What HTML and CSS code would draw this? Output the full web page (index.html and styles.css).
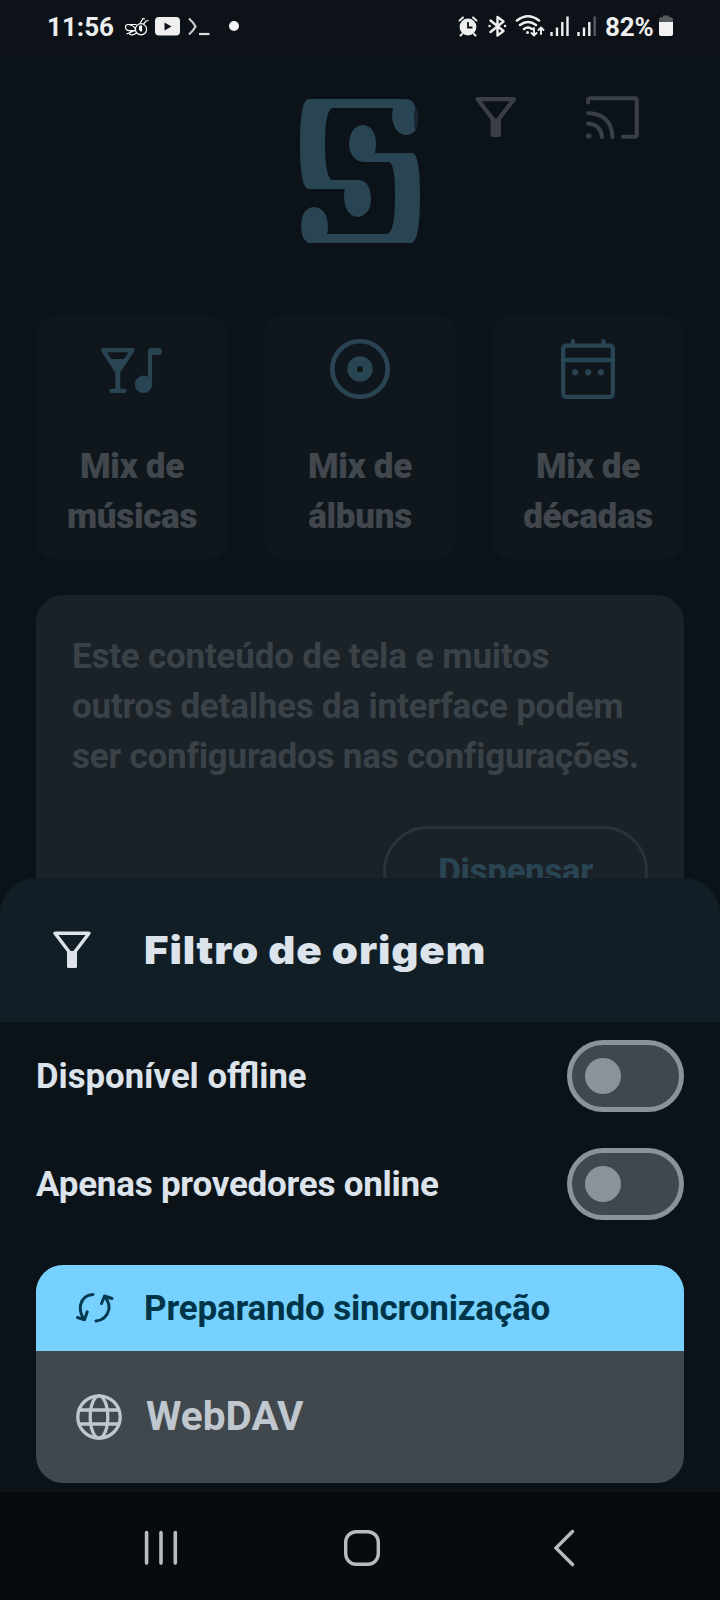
FILE: index.html
```
<!DOCTYPE html>
<html lang="pt-BR">
<head>
<meta charset="utf-8">
<title>Filtro de origem</title>
<link rel="stylesheet" href="styles.css">
</head>
<body>
<div class="screen">
  <div class="statusbar">
    <span class="clock">11:56</span>
    <svg class="status-left" width="120" height="28" viewBox="122 12 120 28">
      <g fill="none" stroke="#fff" stroke-width="1.200">
        <circle cx="141" cy="29.300" r="5.600"/>
        <path d="M136.500 24.500h-8.500q-2.500 0-2.500 2.500q0 3.500 4 3.700h5.500M128.500 24.500q6 1 7 5M135 30.500l-8.500 3.500M133 30.500q-4.500 2-3.500 3.500q3 2 7-1M140 23.500l3-5 2 .5M143.500 24l2.500-3 2.500-.5"/>
        <path d="M139.500 27.500q0-2 2-1.500v5q-2 0-2-3.500z" fill="#fff"/>
      </g>
      <rect x="155" y="17" width="25" height="18.500" rx="4" fill="#f0f0f0"/>
      <path d="M164.500 22.500v8l7-4z" fill="#0c1219"/>
      <path d="M189 18.500q4.500 4 6.500 8q-2 4-6.500 8" fill="none" stroke="#ccc" stroke-width="2.200"/>
      <path d="M199 34h10.500" stroke="#ddd" stroke-width="2.200"/>
      <circle cx="234" cy="26" r="5" fill="#f4f4f4"/>
    </svg>
    <svg class="status-right" width="140" height="28" viewBox="458 12 140 28">
      <g stroke="#eee" fill="none" stroke-linecap="round">
        <circle cx="468" cy="27" r="8.400" fill="#eee" stroke="none"/>
        <path d="M459.500 20.500l3.500-3M476.500 20.500l-3.500-3M462 34l-1.500 1.500M474 34l1.500 1.500" stroke-width="2"/>
        <path d="M468 22v5.500h4.500" stroke="#0c1219" stroke-width="1.800" stroke-linecap="butt"/>
        <path d="M490.500 20.500l13 10.500-6 4.500v-18.500l6 4.500-13 10.500M489.500 26h.1M505 26h.1" stroke-width="2.400" stroke-linejoin="round"/>
        <path d="M517 20.500q11-8.500 22 0M520 25q8-6 16 0M524 29q4-3 8 0" stroke-width="2.500"/>
        <circle cx="527.500" cy="32.500" r="1.500" fill="#eee" stroke="none"/>
        <path d="M534 28v7M531.500 33l2.500 2.500 2.500-2.500M541 34v-6.500M538.500 30l2.500-2.500 2.500 2.500" stroke-width="1.900"/>
      </g>
      <path d="M551.500 32v4M557 27.500v8.500M562.300 22v14M567.500 16.500v19.500M578.500 32v4M584 27.500v8.500M589.300 22v14" stroke="#eee" stroke-width="2.400"/>
      <path d="M594.700 16.500v19.500" stroke="#565a5e" stroke-width="2.400"/>
    </svg>
    <span class="battery-text">82%</span>
    <svg class="battery" width="14" height="22" viewBox="0 0 14 22">
      <path d="M0 8v-3q0-3 3-3h1v-1.500h6v1.500h1q3 0 3 3v3z" fill="#55595c"/>
      <path d="M0 7h14v12q0 2-2 2h-10q-2 0-2-2z" fill="#f2f2f2"/>
    </svg>
  </div>

  <div class="home">
    <div class="topbar">
      <svg class="logo" width="122" height="146" viewBox="299 98 122 146" fill="#294452">
        <path d="M308 99H405Q413 99 415 106Q419 119 415 131Q411 135 406 135Q394 134 392 117Q392 111 393 108H333Q325 109 325 143Q325 180 333 180H359Q370 181 371 198Q371 215 358 217Q346 216 344 199Q344 192 345 189H308Q300 187 300 144Q300 101 308 99Z"/>
        <path d="M415.500 106q6 13 0 26q-3-13 0-26z" fill="#182530"/>
        <path d="M412 243H308Q301 239 301 225Q302 208 314 207Q327 208 328 226Q328 231 327 234H387Q395 233 395 196Q395 163 389 162H363Q350 160 349 144Q350 126 363 125Q375 126 376 143Q376 149 375 153H413Q420 156 420 197Q420 239 412 243Z"/>
      </svg>
      <svg class="top-filter" width="42" height="42" viewBox="0 0 42 42">
        <path d="M2.500 3.200h36.500l-16.500 21.300h-3.500z" fill="none" stroke="#3a3f46" stroke-width="4.200" stroke-linejoin="round"/>
        <path d="M15.500 23h10.500v16q0 2-2 2h-6.500q-2 0-2-2z" fill="#3a3f46"/>
      </svg>
      <svg class="top-cast" width="54" height="44" viewBox="0 0 54 44">
        <g fill="none" stroke="#3a3f46" stroke-width="4" stroke-linecap="round" stroke-linejoin="round">
          <path d="M2 6.500v-2q0-2.300 2.300-2.300h44.200q2.300 0 2.300 2.300v34q0 2.300-2.300 2.300H37M2 17q23.500 1 24.500 24M2 27.500q13 1 14 13.500"/>
        </g>
        <circle cx="2.800" cy="40" r="2.800" fill="#3a3f46"/>
      </svg>
    </div>

    <div class="mixes">
      <div class="mix">
        <svg width="64" height="60" viewBox="100 339 64 60">
          <g fill="none" stroke="#294452" stroke-width="4.200" stroke-linecap="round" stroke-linejoin="round">
            <path d="M103 350.200h29.500l-12.500 18.800h-4.500zM117.800 367v23M111.500 390.800h13M150 384v-31q0-2.800 2.800-2.800h6"/>
          </g>
          <path d="M106.500 359h22.500l-10 14h-3z" fill="#294452"/>
          <path d="M115.500 368h4.800v22h-4.800z" fill="#294452"/>
          <circle cx="143.500" cy="384.300" r="8.700" fill="#294452"/>
          <rect x="148" y="348" width="14" height="7" rx="3.500" fill="#294452"/>
        </svg>
        <span>Mix de<br>músicas</span>
      </div>
      <div class="mix">
        <svg width="64" height="60" viewBox="328 339 64 60" fill="none" stroke="#294452">
          <circle cx="360" cy="369" r="27.700" stroke-width="4.600"/>
          <circle cx="360" cy="369" r="7.900" stroke-width="9.600"/>
        </svg>
        <span>Mix de<br>álbuns</span>
      </div>
      <div class="mix">
        <svg width="64" height="60" viewBox="556 339 64 60">
          <rect x="563.200" y="345.700" width="49.600" height="51.100" rx="2.500" fill="none" stroke="#294452" stroke-width="4.300"/>
          <path d="M563 360h50M572.800 341.300v3M603.500 341.300v3" fill="none" stroke="#294452" stroke-width="4.500" stroke-linecap="round"/>
          <g fill="#294452"><circle cx="575" cy="372.300" r="3.100"/><circle cx="588.200" cy="372.300" r="3.100"/><circle cx="601" cy="372.300" r="3.100"/></g>
        </svg>
        <span>Mix de<br>décadas</span>
      </div>
    </div>

    <div class="notice">
      <p>Este conteúdo de tela e muitos<br>outros detalhes da interface podem<br>ser configurados nas configurações.</p>
      <div class="dismiss">Dispensar</div>
    </div>
  </div>

  <div class="sheet">
    <div class="sheet-head">
      <svg width="38" height="38" viewBox="0 0 38 38">
        <path d="M2 2.300h34l-15 19.700h-4z" fill="none" stroke="#dce3eb" stroke-width="3.400" stroke-linejoin="round"/>
        <path d="M14 20h10v15.500q0 1.500-1.500 1.500h-7q-1.500 0-1.500-1.500z" fill="#dce3eb"/>
      </svg>
      <h1>Filtro de origem</h1>
    </div>
    <div class="options">
      <div class="option"><span class="opt-a">Disponível offline</span><div class="switch"><i></i></div></div>
      <div class="option"><span class="opt-b">Apenas provedores online</span><div class="switch"><i></i></div></div>
    </div>
    <div class="provider">
      <div class="sync">
        <svg width="38" height="32" viewBox="76 1293 38 32" fill="none" stroke="#063a52" stroke-width="3" stroke-linecap="round" stroke-linejoin="round">
          <path d="M93 1295.500Q83 1296 80.500 1306Q79.500 1314 84 1320.500M77.500 1318.500l7 2.300 2.700-8"/>
          <path d="M96 1322Q106.500 1321 109 1310Q109.500 1303 104.500 1297.500M101.500 1304.500l3-7.500 7.500 2.500"/>
        </svg>
        <span>Preparando sincronização</span>
      </div>
      <div class="source">
        <svg width="46" height="46" viewBox="0 0 46 46" fill="none" stroke="#c1c7cf" stroke-width="3.300">
          <circle cx="23" cy="23" r="21.200"/>
          <ellipse cx="23" cy="23" rx="8.800" ry="21.200"/>
          <path d="M3 16h40M3 30h40"/>
        </svg>
        <span>WebDAV</span>
      </div>
    </div>
    <div class="navbar">
      <svg width="34" height="36" viewBox="0 0 34 36" stroke="#b9bbbd" stroke-width="3.600" stroke-linecap="round"><path d="M2.600 2.600v30.500M17 2.600v30.500M31.300 2.600v30.500"/></svg>
      <svg class="nav-home" width="36" height="36" viewBox="0 0 36 36" fill="none" stroke="#b9bbbd" stroke-width="3.400"><rect x="1.700" y="1.700" width="32.600" height="32.600" rx="10.500"/></svg>
      <svg width="22" height="38" viewBox="0 0 22 38" fill="none" stroke="#b9bbbd" stroke-width="3.400" stroke-linecap="round"><path d="M19.500 2.500l-16.500 16.500 16.500 16.500"/></svg>
    </div>
  </div>
</div>
</body>
</html>
```
FILE: styles.css
```
* { box-sizing: border-box; }
body { margin: 0; background: #0b1218; }
.screen {
  position: relative;
  width: 720px;
  height: 1600px;
  overflow: hidden;
  background: #0b1319;
  font-family: Roboto, sans-serif;
  font-weight: 700;
}
svg { display: block; flex: none; }

/* Status bar */
.statusbar {
  display: flex;
  align-items: center;
  height: 52px;
  padding-left: 47px;
  background: #0c1218;
  color: #eee;
  font-size: 26px;
}
.clock { width: 75px; padding-top: 2px; letter-spacing: 0; }
.status-right { margin-left: 216px; }
.battery-text { width: 54px; margin-left: 7px; padding-top: 2px; letter-spacing: -0.2px; }

/* Home content */
.topbar {
  display: flex;
  align-items: flex-start;
  height: 263px;
  padding: 46px 0 0 299px;
}
.top-filter { margin: -2px 0 0 54px; }
.top-cast { margin: -2px 0 0 69px; }
.mixes {
  display: grid;
  grid-template-columns: repeat(3, 192px);
  gap: 36px;
  padding: 0 36px;
}
.mix {
  display: flex;
  flex-direction: column;
  align-items: center;
  gap: 43px;
  height: 244px;
  padding-top: 24px;
  border-radius: 20px;
  background: #0f171c;
  color: #41474d;
  font-size: 35px;
  font-weight: 900;
  line-height: 50px;
  letter-spacing: -0.3px;
  text-align: center;
}
.notice {
  display: flex;
  flex-direction: column;
  align-items: flex-end;
  height: 357px;
  margin: 36px 36px 0;
  padding: 37px 36px 36px;
  border-radius: 27px;
  background: #1a2127;
}
.notice p {
  width: 100%;
  margin: 0 0 44px;
  color: #3a4147;
  font-size: 35px;
  line-height: 50px;
  letter-spacing: -0.22px;
  white-space: nowrap;
}
.dismiss {
  display: grid;
  place-items: center;
  width: 265px;
  height: 90px;
  border: 3px solid #2b3238;
  border-radius: 45px;
  color: #294452;
  font-size: 35px;
  font-weight: 800;
  letter-spacing: -0.4px;
}

/* Bottom sheet */
.sheet {
  position: absolute;
  inset: 878px 0 0;
  display: flex;
  flex-direction: column;
  overflow: hidden;
  border-radius: 36px 36px 0 0;
  background: #0b1218;
  color: #dce3eb;
}
.sheet-head {
  display: flex;
  align-items: center;
  height: 144px;
  padding-left: 53px;
  background: #121e26;
}
.sheet-head h1 {
  margin: 0 0 0 53px;
  font: 900 38.5px Inter, sans-serif;
  letter-spacing: 0.8px;
  white-space: nowrap;
  transform: scaleX(1.09);
  transform-origin: left;
}
.options {
  display: flex;
  flex-direction: column;
  gap: 36px;
  padding: 18px 36px 45px;
}
.option {
  display: flex;
  align-items: center;
  justify-content: space-between;
  height: 72px;
  font-size: 35px;
  letter-spacing: -0.24px;
}
/* Keeps the "ffl" ligature that letter-spacing would turn off */
.opt-a { letter-spacing: 0; font-size: 34.7px; }
.switch {
  display: flex;
  align-items: center;
  width: 117px;
  height: 72px;
  padding-left: 13px;
  border: 5px solid #8b9298;
  border-radius: 36px;
  background: #41484d;
}
.switch i {
  width: 36px;
  height: 36px;
  border-radius: 50%;
  background: #8b9298;
}
.provider {
  height: 218px;
  margin: 0 36px;
  overflow: hidden;
  border-radius: 27px;
  background: #41484d;
}
.sync {
  display: flex;
  align-items: center;
  gap: 30px;
  height: 86px;
  padding-left: 40px;
  background: #76d1ff;
  color: #003549;
  font-size: 35px;
  letter-spacing: -0.18px;
}
.source {
  display: flex;
  align-items: center;
  gap: 24px;
  height: 132px;
  padding-left: 40px;
  color: #c1c7cf;
  font-size: 40.5px;
}
.source span { padding-bottom: 2px; }
.navbar {
  display: flex;
  align-items: center;
  justify-content: space-between;
  height: 108px;
  margin-top: 9px;
  padding: 4px 145px 0 144px;
  background: #070b0e;
}
.nav-home { margin-right: 7px; }
```
